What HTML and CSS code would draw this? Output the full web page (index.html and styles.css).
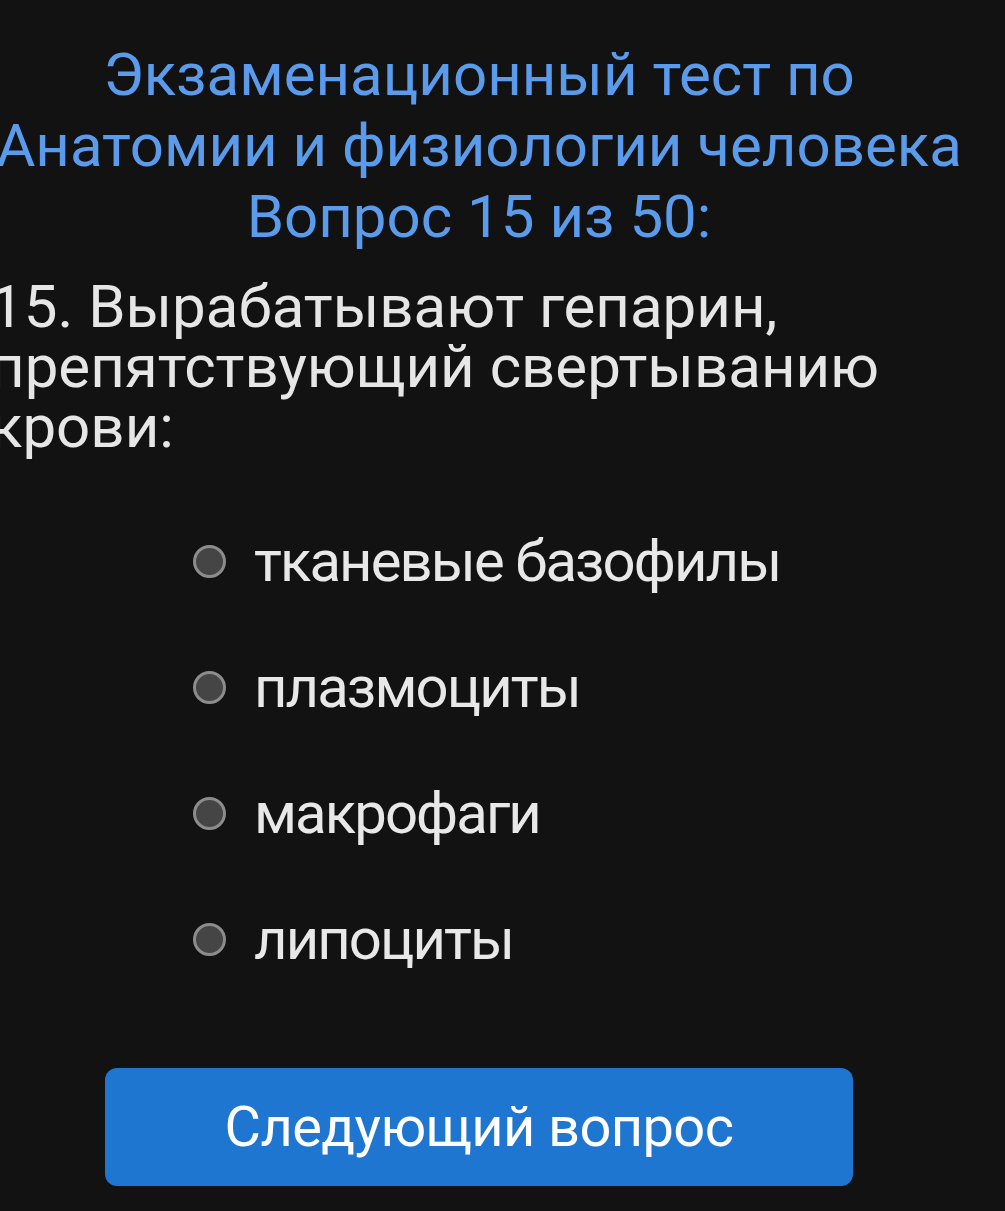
FILE: index.html
```html
<html>
  <head>
    <title>Экзаменационный тест</title>
    <meta name="viewport" content="width=device-width, initial-scale=1" />
    <link rel="stylesheet" href="styles.css">
  </head>
  <body>
    <div class="quiz">
      <h1 class="quiz-title">
        Экзаменационный тест по<br />
        Анатомии и физиологии человека<br />
        Вопрос 15 из 50:
      </h1>
      <p class="question">15. Вырабатывают гепарин, препятствующий свертыванию крови:</p>
      <form class="answers">
        <label class="answer">
          <input type="radio" name="answer" value="1" />
          <span class="radio"></span>
          <span class="answer-text">тканевые базофилы</span>
        </label>
        <label class="answer">
          <input type="radio" name="answer" value="2" />
          <span class="radio"></span>
          <span class="answer-text">плазмоциты</span>
        </label>
        <label class="answer">
          <input type="radio" name="answer" value="3" />
          <span class="radio"></span>
          <span class="answer-text">макрофаги</span>
        </label>
        <label class="answer">
          <input type="radio" name="answer" value="4" />
          <span class="radio"></span>
          <span class="answer-text">липоциты</span>
        </label>
      </form>
      <button class="next-btn" type="button">Следующий вопрос</button>
    </div>
  </body>
</html>
```

FILE: styles.css
```css
body {
  margin: 0;
  background-color: #121212;
  font-family: Roboto, "Noto Sans", sans-serif;
  overflow: hidden;
}
.quiz {
  width: 980px;
  margin-left: -11px;
  padding-top: 39px;
}
.quiz-title {
  margin: 0;
  text-align: center;
  font-size: 60px;
  font-weight: normal;
  line-height: 71px;
  color: #5b9bec;
}
.question {
  margin: 25px 0 0 0;
  padding-left: 1px;
  font-size: 60px;
  line-height: 60px;
  color: #e6e6e6;
}
.answers {
  margin: 41px 0 0 0;
  padding-left: 204px;
}
.answer {
  display: flex;
  align-items: center;
  height: 126px;
  cursor: pointer;
}
.answer input {
  display: none;
}
.radio {
  box-sizing: border-box;
  width: 33px;
  height: 33px;
  border: 3px solid #8c8c8c;
  border-radius: 50%;
  background-color: #454545;
  flex-shrink: 0;
}
.answer input:checked + .radio {
  background-color: #1e76d0;
}
.answer-text {
  margin-left: 28px;
  font-size: 58px;
  letter-spacing: -1.9px;
  color: #e8e8e8;
}
.next-btn {
  display: block;
  width: 748px;
  height: 118px;
  margin: 66px auto 0 auto;
  border: none;
  border-radius: 12px;
  background-color: #1e76d0;
  color: #ffffff;
  font-family: Roboto, "Noto Sans", sans-serif;
  font-size: 56px;
  letter-spacing: -0.6px;
  cursor: pointer;
}
```
